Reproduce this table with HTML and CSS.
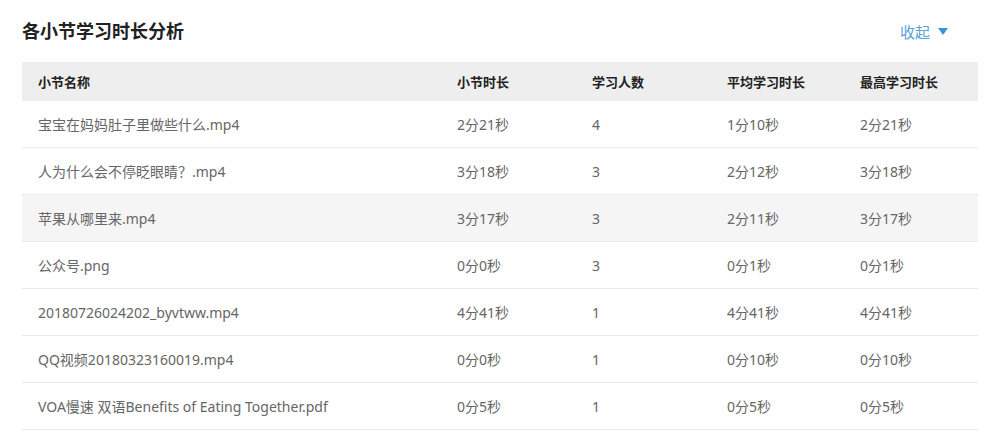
FILE: index.html
```html
<!DOCTYPE html>
<html lang="zh-CN">
<head>
<meta charset="utf-8">
<title>各小节学习时长分析</title>
<link rel="stylesheet" href="styles.css">
</head>
<body>
<div class="panel">
  <div class="panel-head">
    <h2 class="panel-title">各小节学习时长分析</h2>
    <a class="toggle" href="#">收起<span class="caret"></span></a>
  </div>
  <table class="stats">
    <colgroup>
      <col class="c-name"><col class="c-num"><col class="c-num"><col class="c-num2"><col>
    </colgroup>
    <thead>
      <tr><th>小节名称</th><th>小节时长</th><th>学习人数</th><th>平均学习时长</th><th>最高学习时长</th></tr>
    </thead>
    <tbody>
      <tr><td>宝宝在妈妈肚子里做些什么.mp4</td><td>2分21秒</td><td>4</td><td>1分10秒</td><td>2分21秒</td></tr>
      <tr><td>人为什么会不停眨眼睛？.mp4</td><td>3分18秒</td><td>3</td><td>2分12秒</td><td>3分18秒</td></tr>
      <tr class="hover"><td>苹果从哪里来.mp4</td><td>3分17秒</td><td>3</td><td>2分11秒</td><td>3分17秒</td></tr>
      <tr><td>公众号.png</td><td>0分0秒</td><td>3</td><td>0分1秒</td><td>0分1秒</td></tr>
      <tr><td>20180726024202_byvtww.mp4</td><td>4分41秒</td><td>1</td><td>4分41秒</td><td>4分41秒</td></tr>
      <tr><td>QQ视频20180323160019.mp4</td><td>0分0秒</td><td>1</td><td>0分10秒</td><td>0分10秒</td></tr>
      <tr><td>VOA慢速 双语Benefits of Eating Together.pdf</td><td>0分5秒</td><td>1</td><td>0分5秒</td><td>0分5秒</td></tr>
    </tbody>
  </table>
</div>
</body>
</html>
```

FILE: styles.css
```css
html, body {
  margin: 0;
  padding: 0;
  background: #fff;
}
body {
  font-family: "Noto Sans", "Noto Sans CJK SC", sans-serif;
  font-size: 14px;
  color: #666;
}
.panel {
  padding: 0 8px 0 22px;
}
.panel-head {
  height: 62px;
  display: flex;
  align-items: center;
  justify-content: space-between;
  padding-right: 30px;
}
.panel-title {
  margin: 0 0 2px;
  font-family: "Noto Sans CJK SC", sans-serif;
  font-size: 18px;
  font-weight: 700;
  color: #222;
  line-height: 24px;
}
.toggle {
  display: flex;
  align-items: center;
  gap: 8px;
  font-family: "Noto Sans CJK SC", sans-serif;
  font-size: 15px;
  color: #5a9fd6;
  text-decoration: none;
}
.caret {
  width: 0;
  height: 0;
  border-left: 5px solid transparent;
  border-right: 5px solid transparent;
  border-top: 7px solid #3d93d6;
}
.stats {
  width: 100%;
  border-collapse: collapse;
  table-layout: fixed;
}
.c-name { width: 419px; }
.c-num { width: 135px; }
.c-num2 { width: 133px; }
.stats th {
  height: 39px;
  background: #eeeeee;
  text-align: left;
  font-family: "Noto Sans CJK SC", sans-serif;
  font-weight: 700;
  font-size: 13px;
  color: #222;
  padding: 0 16px;
}
.stats td {
  height: 46px;
  padding: 0 16px;
  border-bottom: 1px solid #e9e9e9;
  white-space: nowrap;
}
.stats tr.hover td {
  background: #f5f5f5;
}
```
